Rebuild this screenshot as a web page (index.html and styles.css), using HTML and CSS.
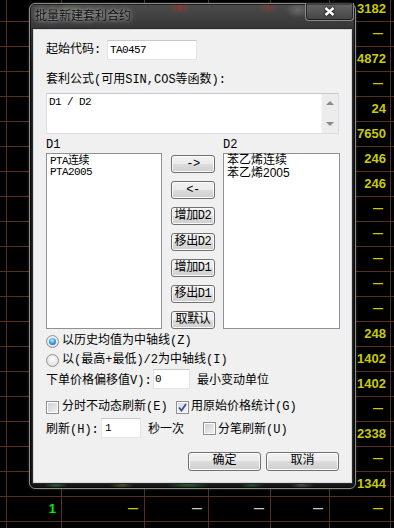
FILE: index.html
```html
<!DOCTYPE html>
<html>
<head>
	<meta charset="utf-8">
	<title>批量新建套利合约</title>

	<link rel="stylesheet" href="styles.css">

</head>
<body>

	<div class="board">
		<div class="row"><span class="v">3182</span></div>
		<div class="row"><span class="v d">—</span></div>
		<div class="row"><span class="v">4872</span></div>
		<div class="row"><span class="v d">—</span></div>
		<div class="row"><span class="v">24</span></div>
		<div class="row"><span class="v">7650</span></div>
		<div class="row"><span class="v">246</span></div>
		<div class="row"><span class="v">246</span></div>
		<div class="row"><span class="v d">—</span></div>
		<div class="row"><span class="v d">—</span></div>
		<div class="row"><span class="v d">—</span></div>
		<div class="row"><span class="v d">—</span></div>
		<div class="row"><span class="v d">—</span></div>
		<div class="row"><span class="v">248</span></div>
		<div class="row"><span class="v">1402</span></div>
		<div class="row"><span class="v">1402</span></div>
		<div class="row"><span class="v d">—</span></div>
		<div class="row"><span class="v">2338</span></div>
		<div class="row"><span class="v d">—</span></div>
		<div class="row"><span class="v">1344</span></div>
		<div class="row">
			<span class="c2 num">1</span>
			<span class="c3 d">—</span>
			<span class="c4 d gray">—</span>
			<span class="c5 d gray">—</span>
			<span class="c6 d gray">—</span>
			<span class="v d">—</span>
		</div>
		<div class="row"></div>
	</div>

	<div class="dialog">
		<div class="titlebar">
			<span class="title">批量新建套利合约</span>
			<button class="close">
				<svg width="11" height="9" viewBox="0 0 11 9"><path d="M1.5 1 L9.5 8 M9.5 1 L1.5 8" stroke="#fff" stroke-width="2.4" fill="none"/></svg>
			</button>
		</div>

		<div class="client">
			<div class="line r-code">
				<span class="code-label">起始代码:</span>
				<div class="edit edit-code">TA0457</div>
			</div>

			<div class="caption">套利公式(可用SIN,COS等函数):</div>

			<div class="formula">
				<div class="formula-text">D1 / D2</div>
				<div class="vscroll">
					<span class="arr-up"></span>
					<span class="arr-down"></span>
				</div>
			</div>

			<div class="dlabels">
				<span class="dl1">D1</span>
				<span>D2</span>
			</div>

			<div class="lists">
				<div class="listbox list-d1">
					<div>PTA连续</div>
					<div>PTA2005</div>
				</div>
				<div class="mid">
					<button class="btn side">-&gt;</button>
					<button class="btn side">&lt;-</button>
					<button class="btn side">增加D2</button>
					<button class="btn side">移出D2</button>
					<button class="btn side">增加D1</button>
					<button class="btn side">移出D1</button>
					<button class="btn side">取默认</button>
				</div>
				<div class="listbox list-d2">
					<div>苯乙烯连续</div>
					<div>苯乙烯2005</div>
				</div>
			</div>

			<div class="line opt">
				<span class="radio on"></span>
				<span>以历史均值为中轴线(Z)</span>
			</div>
			<div class="line opt">
				<span class="radio"></span>
				<span>以(最高+最低)/2为中轴线(I)</span>
			</div>

			<div class="line r-offset">
				<span class="offset-label">下单价格偏移值V):</span>
				<div class="edit edit-offset">0</div>
				<span class="unit">最小变动单位</span>
			</div>

			<div class="line r-checks">
				<span class="chk-item first">
					<span class="check"></span>
					<span>分时不动态刷新(E)</span>
				</span>
				<span class="chk-item">
					<span class="check on">
						<svg width="9" height="9" viewBox="0 0 9 9"><path d="M1 4.5 L3.5 7.5 L8 1" stroke="#3a4d96" stroke-width="1.8" fill="none"/></svg>
					</span>
					<span class="chk-text">用原始价格统计(G)</span>
				</span>
			</div>

			<div class="line r-refresh">
				<span class="refresh-label">刷新(H):</span>
				<div class="edit edit-sec">1</div>
				<span class="per">秒一次</span>
				<span class="chk-item split">
					<span class="check"></span>
					<span class="chk-text">分笔刷新(U)</span>
				</span>
			</div>

			<div class="line r-buttons">
				<button class="btn big">确定</button>
				<button class="btn big">取消</button>
			</div>
		</div>
	</div>

</body>
</html>
```

FILE: styles.css
```css
body {
	margin: 0;
	width: 394px;
	height: 528px;
	overflow: hidden;
	position: relative;
	background: #000;
	font-family: "Liberation Mono", "Noto Sans CJK SC", monospace;
	font-size: 12px;
}

/* quote table behind the dialog */
.board {
	margin-top: -3px;
	background:
		linear-gradient(#55301e, #55301e) 6px 0 / 1px 100% no-repeat,
		linear-gradient(#55301e, #55301e) 61px 0 / 1px 100% no-repeat,
		linear-gradient(#55301e, #55301e) 144px 0 / 1px 100% no-repeat,
		linear-gradient(#55301e, #55301e) 208px 0 / 1px 100% no-repeat,
		linear-gradient(#55301e, #55301e) 270px 0 / 1px 100% no-repeat,
		linear-gradient(#55301e, #55301e) 329px 0 / 1px 100% no-repeat,
		linear-gradient(#55301e, #55301e) 390px 0 / 1px 100% no-repeat;
}

.row {
	display: grid;
	grid-template-columns: 7px 55px 83px 64px 62px 59px 61px 1fr;
	height: 25px;
	box-sizing: border-box;
	border-bottom: 1px solid #55301e;
	align-items: center;
	text-align: right;
	font: bold 13px/24px "Liberation Sans", sans-serif;
	color: #caca00;
}

.v {
	grid-column: 7;
	padding-right: 5px;
}

.d {
	font-size: 10px;
	padding-right: 7px;
}

.v.d {
	padding-right: 8px;
}

.c2 { grid-column: 2; padding-right: 6px; }
.c3 { grid-column: 3; }
.c4 { grid-column: 4; }
.c5 { grid-column: 5; }
.c6 { grid-column: 6; }

.num {
	color: #00f000;
}

.gray {
	color: #c8c8c8;
}

/* dialog window */
.dialog {
	position: absolute;
	left: 29px;
	top: 3px;
	width: 327px;
	height: 486px;
	box-sizing: border-box;
	border: 1px solid #8c8c8c;
	border-radius: 6px;
	background:
		radial-gradient(10px 7px at 150px 3px, rgba(210, 40, 40, .45), transparent),
		radial-gradient(8px 7px at 238px 3px, rgba(210, 40, 40, .35), transparent),
		radial-gradient(12px 8px at 268px 6px, rgba(210, 210, 210, .25), transparent),
		radial-gradient(14px 6px at 40px 4px, rgba(120, 160, 90, .25), transparent),
		radial-gradient(12px 4px at 26px 481px, rgba(60, 200, 90, .4), transparent),
		radial-gradient(12px 4px at 92px 481px, rgba(180, 190, 60, .35), transparent),
		radial-gradient(22px 4px at 158px 481px, rgba(60, 200, 90, .4), transparent),
		radial-gradient(12px 4px at 222px 481px, rgba(60, 200, 90, .35), transparent),
		radial-gradient(12px 4px at 272px 481px, rgba(200, 200, 200, .3), transparent),
		linear-gradient(#4c4c4c, #383838 22px, #1c1c1c 60px, #151515);
	box-shadow: inset 0 0 0 1px rgba(0, 0, 0, .6), 0 0 3px rgba(255, 255, 255, .2);
}

.titlebar {
	display: flex;
	justify-content: space-between;
	align-items: flex-start;
	height: 25px;
	padding: 0 1px 0 5px;
}

.title {
	margin-top: 4px;
	line-height: 14px;
	font-family: "Noto Sans CJK SC", sans-serif;
	color: #101010;
	text-shadow: 0 0 6px rgba(255, 255, 255, .65), 0 0 3px rgba(255, 255, 255, .45);
}

.close {
	width: 49px;
	height: 18px;
	margin-top: -1px;
	padding: 0;
	box-sizing: border-box;
	border: 1px solid #8a8a8a;
	border-top: none;
	border-radius: 0 0 4px 4px;
	background: linear-gradient(rgba(255, 255, 255, .14), rgba(255, 255, 255, .03));
	box-shadow: inset 0 0 0 1px rgba(0, 0, 0, .55);
	display: flex;
	align-items: center;
	justify-content: center;
}

.close svg {
	filter: drop-shadow(0 0 1px #000);
}

.client {
	margin: 0 3px;
	height: 454px;
	box-sizing: border-box;
	border: 1px solid #d4d8dc;
	box-shadow: 0 0 0 1px #2a2a2a;
	background: #f0f0f0;
	padding: 0 11px 0 12px;
	color: #000;
}

.line {
	display: flex;
	align-items: center;
}

.edit {
	flex-shrink: 0;
	box-sizing: border-box;
	height: 20px;
	background: #fff;
	border: 1px solid #e2e5ea;
	border-top-color: #c6c9ce;
	padding: 2px 2px 0;
	font: 11px/14px "Liberation Mono", monospace;
	letter-spacing: -.6px;
}

.r-code {
	margin-top: 10px;
}

.code-label {
	width: 61px;
	line-height: 20px;
}

.edit-code {
	width: 90px;
}

.caption {
	margin-top: 13px;
	line-height: 14px;
}

.formula {
	display: flex;
	margin-top: 6px;
	width: 293px;
	height: 41px;
	box-sizing: border-box;
	background: #fff;
	border: 1px solid #dadde2;
	border-top-color: #c6c9ce;
}

.formula-text {
	flex: 1;
	padding: 1px 0 0 2px;
	font: 11px/14px "Liberation Mono", monospace;
	letter-spacing: -.6px;
}

.vscroll {
	width: 17px;
	box-sizing: border-box;
	padding: 7px 0;
	background: #ececec;
	border-left: 1px solid #f6f6f6;
	display: flex;
	flex-direction: column;
	justify-content: space-between;
	align-items: center;
}

.arr-up {
	border-left: 4px solid transparent;
	border-right: 4px solid transparent;
	border-bottom: 4px solid #8a8a8a;
}

.arr-down {
	border-left: 4px solid transparent;
	border-right: 4px solid transparent;
	border-top: 4px solid #8a8a8a;
}

.dlabels {
	display: flex;
	margin-top: 4px;
	line-height: 14px;
}

.dl1 {
	width: 177px;
}

.lists {
	display: flex;
	margin-top: 1px;
	height: 176px;
}

.listbox {
	box-sizing: border-box;
	background: #fff;
	border: 1px solid #8d9096;
	padding: 2px 3px;
	line-height: 11px;
}

.list-d1 {
	width: 116px;
	font-size: 11px;
	letter-spacing: -.6px;
}

.list-d2 {
	width: 117px;
	padding-top: 0;
	line-height: 13px;
	font-family: "Liberation Sans", "Noto Sans CJK SC", sans-serif;
}

.mid {
	width: 44px;
	margin: 0 8px 0 9px;
	padding-top: 2px;
	display: flex;
	flex-direction: column;
	gap: 8px;
}

.btn {
	box-sizing: border-box;
	padding: 0;
	border: 1px solid #707070;
	border-radius: 3px;
	background: linear-gradient(#f2f2f2, #ebebeb 50%, #dcdcdc 50%, #cfcfcf);
	box-shadow: inset 0 0 0 1px #fbfbfb;
	font-family: "Liberation Mono", "Noto Sans CJK SC", monospace;
	font-size: 12px;
	color: #000;
	white-space: nowrap;
}

.side {
	height: 18px;
	line-height: 16px;
	letter-spacing: -.4px;
}

.opt {
	margin-top: 5px;
	height: 14px;
	line-height: 14px;
}

.radio {
	width: 13px;
	height: 13px;
	box-sizing: border-box;
	margin-right: 3px;
	border: 1px solid #8e8f8f;
	border-radius: 50%;
	background: radial-gradient(circle at 50% 40%, #fdfdfd, #d8d8d8);
	display: flex;
	align-items: center;
	justify-content: center;
}

.radio.on::after {
	content: "";
	width: 7px;
	height: 7px;
	border-radius: 50%;
	background: radial-gradient(circle at 45% 35%, #bff0ff 0, #3fa6ea 45%, #0c4a92 100%);
}

.r-offset {
	margin-top: 2px;
}

.offset-label {
	width: 107px;
	flex-shrink: 0;
	white-space: nowrap;
}

.edit-offset {
	width: 37px;
	padding-left: 1px;
}

.unit {
	margin-left: 7px;
}

.r-checks {
	margin-top: 11px;
	height: 14px;
	line-height: 14px;
}

.chk-item {
	display: flex;
	align-items: center;
}

.first {
	width: 130px;
}

.check {
	width: 13px;
	height: 13px;
	box-sizing: border-box;
	margin-right: 3px;
	border: 1px solid #8e8f8f;
	background: linear-gradient(135deg, #c9cdd3, #f3f3f3);
	box-shadow: inset 0 0 0 1px #fff;
	display: flex;
	align-items: center;
	justify-content: center;
}

.check.on {
	background: linear-gradient(135deg, #d6dae0, #f6f6f6);
}

.chk-text {
	margin-left: -1px;
}

.r-refresh {
	margin-top: 4px;
}

.refresh-label {
	width: 55px;
	flex-shrink: 0;
}

.edit-sec {
	width: 40px;
	padding-left: 3px;
}

.per {
	margin-left: 7px;
}

.split {
	margin-left: 19px;
}

.r-buttons {
	margin-top: 14px;
	justify-content: flex-end;
	gap: 5px;
	padding-right: 1px;
}

.big {
	width: 73px;
	height: 19px;
	line-height: 17px;
}
```
